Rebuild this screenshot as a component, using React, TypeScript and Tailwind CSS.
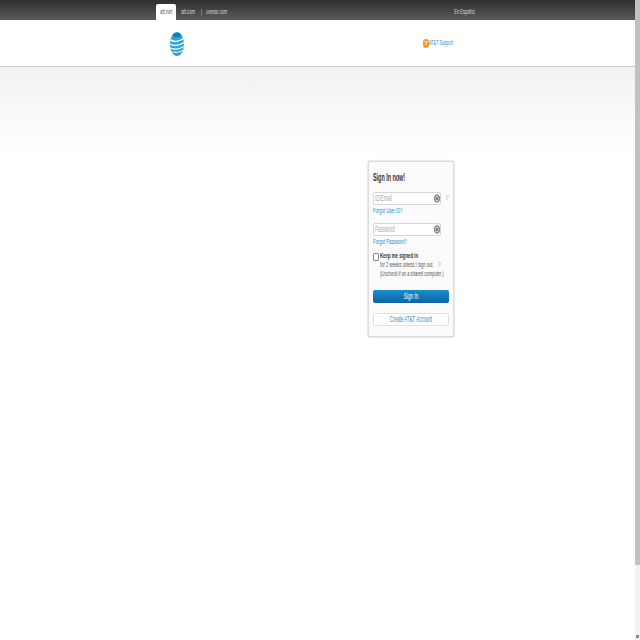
function Logo() {
    return (
        <svg width="14" height="24" viewBox="0 0 14 24" className="block">
            <ellipse cx="7" cy="12" rx="7" ry="12" fill="#2ba3da" />
            <ellipse cx="7" cy="3" rx="4" ry="2" fill="#0f7fb8" />
            <path d="M0.6 8 Q7 11.5 13.4 6.5" stroke="#fff" strokeWidth="1.5" fill="none" />
            <path d="M0.2 12 Q7 15.5 13.8 10.5" stroke="#fff" strokeWidth="1.4" fill="none" />
            <path d="M0.6 16 Q7 19 13.6 14.5" stroke="#fff" strokeWidth="1.2" fill="none" />
            <path d="M2.5 20 Q8 21.5 12.5 18.5" stroke="#fff" strokeWidth="1" fill="none" />
        </svg>
    );
}

function ClearIcon() {
    return (
        <svg width="6" height="9" viewBox="0 0 6 9" className="block shrink-0">
            <ellipse cx="3" cy="4.5" rx="2.5" ry="3.8" fill="#ddd" stroke="#555" strokeWidth="0.9" />
            <path d="M1.8 2.8 L4.2 6.2 M4.2 2.8 L1.8 6.2" stroke="#444" strokeWidth="0.8" />
        </svg>
    );
}

export default function App() {
    return (
        <div className="flex h-[640px] overflow-hidden bg-white font-['Liberation_Sans',sans-serif] text-[8px] text-[#444]">
            <div className="flex-1 flex flex-col">
                {/* Top bar */}
                <div className="h-[20px] bg-gradient-to-b from-[#2f2f2f] to-[#5a5a5a] flex items-end pl-[156px] text-[#ddd]">
                    <div className="w-[20px] h-[16px] bg-white rounded-t-[2px] text-[#555] flex items-center justify-center">
                        <span className="inline-block whitespace-nowrap scale-x-[0.55]">att.net</span>
                    </div>
                    <div className="w-[25px] h-[16px] flex items-center justify-center">
                        <span className="inline-block whitespace-nowrap scale-x-[0.53]">att.com</span>
                    </div>
                    <div className="w-px h-[7px] mb-[4px] bg-[#777]" />
                    <div className="w-[30px] h-[16px] flex items-center justify-center">
                        <span className="inline-block whitespace-nowrap scale-x-[0.5]">uverse.com</span>
                    </div>
                    <div className="ml-[221px] w-[22px] h-[16px] flex items-center justify-center">
                        <span className="inline-block whitespace-nowrap scale-x-[0.5]">En Español</span>
                    </div>
                </div>

                {/* Header */}
                <div className="h-[47px] border-b border-[#ccc] pl-[170px] pt-[12px] flex items-start">
                    <Logo />
                    <div className="ml-[239px] mt-[7px] flex items-center h-[8px]">
                        <div className="w-[6px] h-[9px] rounded-full bg-[#f29a2e] text-white text-[6px] flex items-center justify-center font-bold">?</div>
                        <span className="inline-block whitespace-nowrap origin-left scale-x-[0.48] text-[#1d8fd0]">AT&amp;T Support</span>
                    </div>
                </div>

                {/* Body */}
                <div className="flex-1 bg-[linear-gradient(#f1f1f1,#ffffff_85px)] pl-[368px] pt-[94px]">
                    <div className="w-[86px] h-[176px] bg-[#fbfbfb] rounded-[2px] border border-[#ddd] shadow-[0_0_2px_rgba(0,0,0,0.3)] pl-[4px] pt-[10px]">
                        <div className="h-[10px] text-[10px] font-bold text-[#333] flex items-center">
                            <span className="inline-block whitespace-nowrap origin-left scale-x-[0.54]">Sign In now!</span>
                        </div>
                        <div className="mt-[10px] flex items-center">
                            <div className="w-[68px] h-[13px] bg-white border border-[#d5d5d5] rounded-[2px] flex items-center justify-between pl-[1px] text-[9px] text-[#aaa]">
                                <span className="inline-block w-[20px] whitespace-nowrap origin-left scale-x-[0.5]">ID/Email</span>
                                <ClearIcon />
                            </div>
                            <span className="ml-[4px] text-[#8cc4e4] text-[7px]">?</span>
                        </div>
                        <div className="mt-[1px] h-[9px] flex items-center text-[#1d8fd0]">
                            <span className="inline-block whitespace-nowrap origin-left scale-x-[0.52]">Forgot User ID?</span>
                        </div>
                        <div className="mt-[8px] flex items-center">
                            <div className="w-[68px] h-[13px] bg-white border border-[#d5d5d5] rounded-[2px] flex items-center justify-between pl-[1px] text-[9px] text-[#aaa]">
                                <span className="inline-block w-[20px] whitespace-nowrap origin-left scale-x-[0.5]">Password</span>
                                <ClearIcon />
                            </div>
                        </div>
                        <div className="mt-[1px] h-[9px] flex items-center text-[#1d8fd0]">
                            <span className="inline-block whitespace-nowrap origin-left scale-x-[0.52]">Forgot Password?</span>
                        </div>
                        <div className="mt-[6px] flex items-start">
                            <div className="w-[6px] h-[8px] mt-[1px] shrink-0 bg-white border border-[#888] rounded-[1px]" />
                            <div className="ml-[1px] mt-[-1px] leading-[9px] text-[#555]">
                                <div className="font-bold text-[#333]">
                                    <span className="inline-block w-[39px] whitespace-nowrap origin-left scale-x-[0.54]">Keep me signed in</span>
                                </div>
                                <div className="flex">
                                    <span className="inline-block w-[55px] whitespace-nowrap origin-left scale-x-[0.52]">for 2 weeks unless I sign out.</span>
                                    <span className="ml-[2px] text-[#8cc4e4] text-[7px]">?</span>
                                </div>
                                <div className="w-[65px]">
                                    <span className="inline-block w-[65px] whitespace-nowrap origin-left scale-x-[0.51]">(Uncheck if on a shared computer.)</span>
                                </div>
                            </div>
                        </div>
                        <div className="mt-[12px] w-[76px] h-[13px] rounded-[2px] bg-gradient-to-b from-[#1b8ccb] to-[#0a66a5] text-[9px] text-white flex items-center justify-center">
                            <span className="inline-block whitespace-nowrap scale-x-[0.52]">Sign In</span>
                        </div>
                        <div className="mt-[10px] w-[76px] h-[13px] rounded-[2px] bg-white border border-[#e2e2e2] text-[9px] text-[#1d8fd0] flex items-center justify-center">
                            <span className="inline-block whitespace-nowrap scale-x-[0.49]">Create AT&amp;T Account</span>
                        </div>
                    </div>
                </div>
            </div>

            {/* Scrollbar */}
            <div className="w-[5px] h-full bg-[#f1f1f1] flex flex-col">
                <div className="h-[565px] bg-[#c1c1c1]" />
                <div className="flex-1" />
                <div className="h-[3px] mb-[2px] bg-[#888] mx-[1px]" />
            </div>
        </div>
    );
}
